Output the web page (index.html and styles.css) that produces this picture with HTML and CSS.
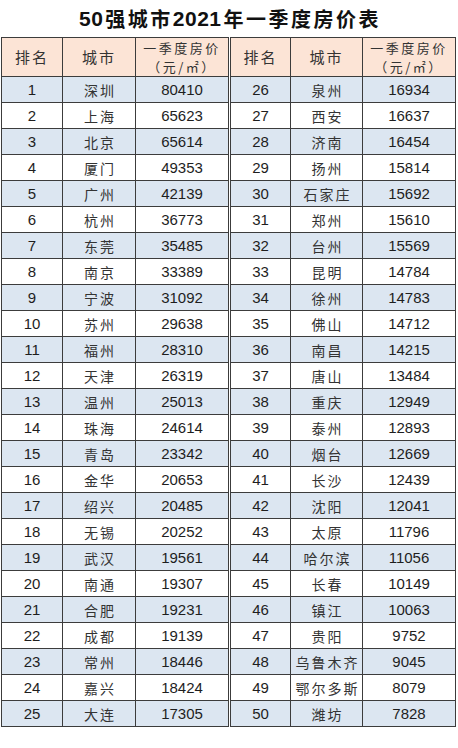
FILE: index.html
```html
<!DOCTYPE html>
<html lang="zh">
<head>
<meta charset="utf-8">
<link rel="stylesheet" href="styles.css">
</head>
<body>
<div class="title"><span class="num">50</span>强城市<span class="num">2021</span>年一季度房价表</div>
<div class="tables">
  <div class="grid left">
    <div class="h">排名</div><div class="h">城市</div><div class="h h2"><span class="l">一季度房价</span><span class="l">（元/㎡）</span></div>
    <div class="n b">1</div><div class="c b">深圳</div><div class="n b">80410</div>
    <div class="n">2</div><div class="c">上海</div><div class="n">65623</div>
    <div class="n b">3</div><div class="c b">北京</div><div class="n b">65614</div>
    <div class="n">4</div><div class="c">厦门</div><div class="n">49353</div>
    <div class="n b">5</div><div class="c b">广州</div><div class="n b">42139</div>
    <div class="n">6</div><div class="c">杭州</div><div class="n">36773</div>
    <div class="n b">7</div><div class="c b">东莞</div><div class="n b">35485</div>
    <div class="n">8</div><div class="c">南京</div><div class="n">33389</div>
    <div class="n b">9</div><div class="c b">宁波</div><div class="n b">31092</div>
    <div class="n">10</div><div class="c">苏州</div><div class="n">29638</div>
    <div class="n b">11</div><div class="c b">福州</div><div class="n b">28310</div>
    <div class="n">12</div><div class="c">天津</div><div class="n">26319</div>
    <div class="n b">13</div><div class="c b">温州</div><div class="n b">25013</div>
    <div class="n">14</div><div class="c">珠海</div><div class="n">24614</div>
    <div class="n b">15</div><div class="c b">青岛</div><div class="n b">23342</div>
    <div class="n">16</div><div class="c">金华</div><div class="n">20653</div>
    <div class="n b">17</div><div class="c b">绍兴</div><div class="n b">20485</div>
    <div class="n">18</div><div class="c">无锡</div><div class="n">20252</div>
    <div class="n b">19</div><div class="c b">武汉</div><div class="n b">19561</div>
    <div class="n">20</div><div class="c">南通</div><div class="n">19307</div>
    <div class="n b">21</div><div class="c b">合肥</div><div class="n b">19231</div>
    <div class="n">22</div><div class="c">成都</div><div class="n">19139</div>
    <div class="n b">23</div><div class="c b">常州</div><div class="n b">18446</div>
    <div class="n">24</div><div class="c">嘉兴</div><div class="n">18424</div>
    <div class="n b">25</div><div class="c b">大连</div><div class="n b">17305</div>
  </div>
  <div class="grid right">
    <div class="h">排名</div><div class="h">城市</div><div class="h h2"><span class="l">一季度房价</span><span class="l">（元/㎡）</span></div>
    <div class="n b">26</div><div class="c b">泉州</div><div class="n b">16934</div>
    <div class="n">27</div><div class="c">西安</div><div class="n">16637</div>
    <div class="n b">28</div><div class="c b">济南</div><div class="n b">16454</div>
    <div class="n">29</div><div class="c">扬州</div><div class="n">15814</div>
    <div class="n b">30</div><div class="c b">石家庄</div><div class="n b">15692</div>
    <div class="n">31</div><div class="c">郑州</div><div class="n">15610</div>
    <div class="n b">32</div><div class="c b">台州</div><div class="n b">15569</div>
    <div class="n">33</div><div class="c">昆明</div><div class="n">14784</div>
    <div class="n b">34</div><div class="c b">徐州</div><div class="n b">14783</div>
    <div class="n">35</div><div class="c">佛山</div><div class="n">14712</div>
    <div class="n b">36</div><div class="c b">南昌</div><div class="n b">14215</div>
    <div class="n">37</div><div class="c">唐山</div><div class="n">13484</div>
    <div class="n b">38</div><div class="c b">重庆</div><div class="n b">12949</div>
    <div class="n">39</div><div class="c">泰州</div><div class="n">12893</div>
    <div class="n b">40</div><div class="c b">烟台</div><div class="n b">12669</div>
    <div class="n">41</div><div class="c">长沙</div><div class="n">12439</div>
    <div class="n b">42</div><div class="c b">沈阳</div><div class="n b">12041</div>
    <div class="n">43</div><div class="c">太原</div><div class="n">11796</div>
    <div class="n b">44</div><div class="c b">哈尔滨</div><div class="n b">11056</div>
    <div class="n">45</div><div class="c">长春</div><div class="n">10149</div>
    <div class="n b">46</div><div class="c b">镇江</div><div class="n b">10063</div>
    <div class="n">47</div><div class="c">贵阳</div><div class="n">9752</div>
    <div class="n b">48</div><div class="c b">乌鲁木齐</div><div class="n b">9045</div>
    <div class="n">49</div><div class="c">鄂尔多斯</div><div class="n">8079</div>
    <div class="n b">50</div><div class="c b">潍坊</div><div class="n b">7828</div>
  </div>
</div>
</body>
</html>
```
FILE: styles.css
```css
html, body {
  margin: 0;
  padding: 0;
  background: #ffffff;
}
body {
  width: 458px;
  height: 748px;
  color: #222222;
  font-family: "Noto Sans CJK SC", sans-serif;
}
.title {
  height: 37px;
  display: flex;
  align-items: center;
  justify-content: center;
  font-family: "Liberation Sans", "Noto Sans CJK SC", sans-serif;
  font-weight: 700;
  font-size: 20px;
  letter-spacing: 2.5px;
  color: #111111;
  padding-left: 2px;
}
.title .num {
  letter-spacing: 0.5px;
  margin-right: 2px;
  font-size: 21px;
}
.tables {
  display: flex;
  gap: 1px;
  margin-left: 1px;
}
.grid {
  display: grid;
  gap: 1px;
  padding: 1px;
  background: #3c3c3c;
  grid-auto-rows: 25px;
  grid-template-rows: 38px;
}
.left {
  grid-template-columns: 60px 72px 92px;
}
.right {
  grid-template-columns: 59px 71px 92px;
}
.grid > div {
  background: #ffffff;
  display: flex;
  align-items: center;
  justify-content: center;
  text-align: center;
}
.grid > .b {
  background: #dce6f1;
}
.grid > .h {
  background: #fce4d6;
  font-size: 15px;
  letter-spacing: 2px;
  color: #333333;
  line-height: 18px;
}
.grid > .h2 {
  flex-direction: column;
  font-size: 13px;
  letter-spacing: 2.5px;
  line-height: 19px;
}
.l {
  display: block;
  height: 19px;
}
.n {
  font-family: "Liberation Sans", sans-serif;
  font-size: 15px;
  color: #1e1e1e;
}
.c {
  font-size: 14px;
  letter-spacing: 2px;
  color: #333333;
  padding-left: 2px;
}
```
